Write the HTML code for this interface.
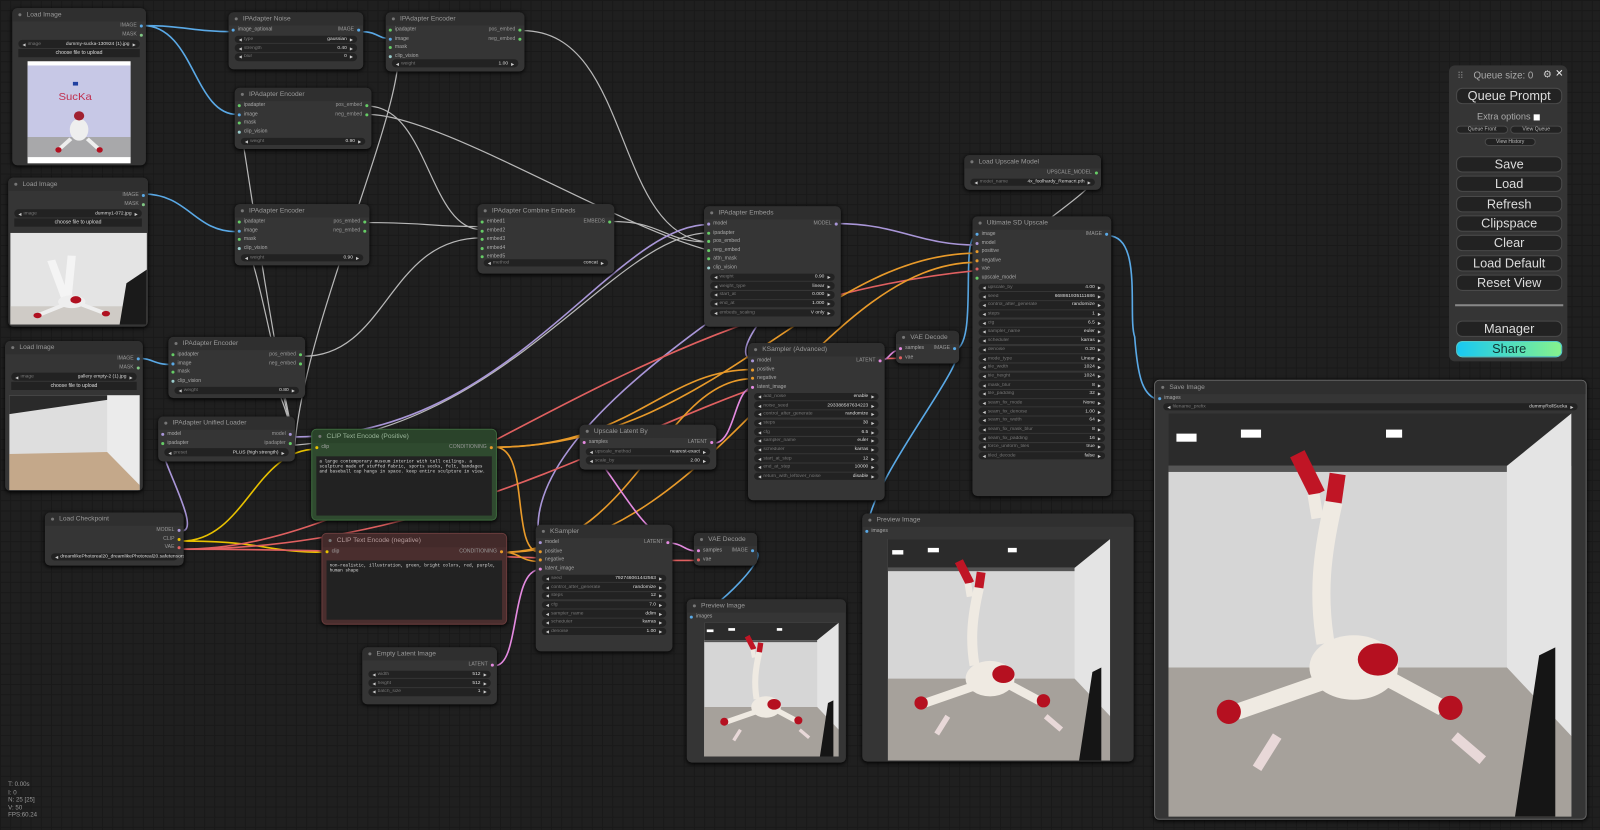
<!DOCTYPE html>
<html><head><meta charset="utf-8"><style>
*{box-sizing:border-box;margin:0;padding:0}
html,body{width:1600px;height:830px;overflow:hidden;background:#1e1e1e}
#st{position:absolute;left:0;top:0;width:1568px;height:813px;transform:scale(1.0204,1.0209);transform-origin:0 0;
background-color:#1f1f1f;background-image:linear-gradient(#191919 1px,transparent 1px),linear-gradient(90deg,#191919 1px,transparent 1px);background-size:10px 10px;font-family:"Liberation Sans",sans-serif}
svg.wires{position:absolute;left:0;top:0}
.n{position:absolute;background:#353535;border-radius:5px;box-shadow:0 1px 4px #000;color:#aaa;font-size:5px;overflow:hidden}
.t{height:13px;line-height:13px;font-size:6.5px;color:#9a9a9a;padding-left:14px;position:relative;background:#2f2f2f}
.t::before{content:"";position:absolute;left:6px;top:5px;width:3px;height:3px;border-radius:50%;background:#777}
.r{height:8.6px;line-height:8.6px;position:relative;padding:0 9px;display:flex;justify-content:space-between}
.r span{position:relative}
.i::before{content:"";position:absolute;left:-6px;top:3px;width:3px;height:3px;border-radius:50%;background:var(--c)}
.o::after{content:"";position:absolute;right:-6px;top:3px;width:3px;height:3px;border-radius:50%;background:var(--d)}
.o{color:#999}
.w{height:7.5px;margin:1.2px 6px;background:#222;border-radius:4px;display:flex;align-items:center;padding:0 4px;font-size:4.8px;color:#ddd}
.w::before{content:"◀";color:#ccc;margin-right:2px;font-size:4px}
.w::after{content:"▶";color:#ccc;margin-left:3px;font-size:4px}
.w b{flex:1;font-weight:normal;color:#777;white-space:nowrap;overflow:hidden}
.w i{font-style:normal;white-space:nowrap}
.bt{height:8px;margin:1px 6px;background:#222;text-align:center;line-height:8px;font-size:5px;color:#ddd}
.ta{position:absolute;background:#222;color:#ddd;font-family:"Liberation Mono",monospace;font-size:4.3px;line-height:5.2px;padding:3px}
.pic{position:absolute;overflow:hidden}
.pic svg{width:100%;height:100%;display:block}
#qp{position:absolute;left:1420px;top:64px;width:116px;height:290px;background:#353535;border-radius:6px;color:#ddd}
#qp .b{position:absolute;left:7px;width:104px;height:16px;background:#222;border:1px solid #4a4a4a;border-radius:6px;text-align:center;line-height:14px;font-size:12.5px}
#qp .s{position:absolute;height:8px;background:#222;border:1px solid #4a4a4a;border-radius:5px;font-size:5px;line-height:6px;text-align:center;color:#bbb}
#stats{position:absolute;left:8px;top:766px;font-size:6px;line-height:7.5px;color:#9a9a9a}
</style></head><body><div id="st">
<svg class="wires" width="1568" height="813" fill="none" stroke-width="1.6">
<g stroke="#5aa9e6">
<path d="M140,25 C180,25 190,31 228,31"/><path d="M140,25 C190,25 190,112 232,112"/>
<path d="M354,31 C370,31 370,38 384,38"/><path d="M140,190 C185,190 190,227 232,227"/>
<path d="M136,351 C150,351 150,357 168,357"/><path d="M738,540 C760,540 700,600 680,605"/>
<path d="M934,343 C960,343 850,470 850,520"/><path d="M934,343 C960,343 940,231 957,231"/>
<path d="M1086,231 C1120,231 1105,310 1112,330 C1115,370 1120,392 1140,392"/>
</g>
<g stroke="#b8b8b8" stroke-width="1.2">
<path d="M512,30 C620,30 600,230 694,237"/><path d="M360,104 C420,104 420,225 472,225"/>
<path d="M358,218 C420,218 420,222 472,222"/><path d="M297,349 C380,349 380,233 472,233"/>
<path d="M600,217 C650,217 650,237 694,237"/><path d="M360,112 C430,112 600,220 694,245"/>
<path d="M289,436 C260,300 240,140 232,104"/><path d="M289,436 C270,360 250,240 232,218"/>
<path d="M289,436 C300,300 420,60 384,30"/><path d="M289,436 C280,400 260,300 168,349"/>
<path d="M289,436 C500,420 600,230 694,228"/><path d="M1065,185 C1050,200 1030,210 957,273"/>
</g>
<g stroke="#a996d8">
<path d="M178,520 C200,520 150,440 158,428"/><path d="M289,428 C500,428 600,220 694,220"/>
<path d="M820,219 C880,219 900,240 957,240"/><path d="M820,219 C840,219 700,340 737,353"/>
<path d="M820,219 C850,230 500,400 529,532"/>
</g>
<g stroke="#e8c100"><path d="M178,530 C240,530 250,440 310,440"/><path d="M178,530 C260,530 260,541 318,541"/></g>
<g stroke="#e06060"><path d="M178,538 C400,538 600,300 957,265"/><path d="M178,538 C400,538 500,549 685,549"/><path d="M178,538 C500,538 700,351 880,351"/></g>
<g stroke="#e89a2a">
<path d="M485,438 C520,438 500,541 529,541"/><path d="M485,438 C620,438 650,362 737,362"/>
<path d="M485,438 C700,438 800,248 957,248"/><path d="M493,541 C510,541 510,550 529,550"/>
<path d="M493,541 C620,541 650,371 737,371"/><path d="M493,541 C700,541 800,257 957,257"/>
</g>
<g stroke="#e48ae0">
<path d="M485,652 C510,652 500,558 529,558"/><path d="M655,532 C670,532 670,540 685,540"/>
<path d="M700,434 C720,434 720,380 737,380"/><path d="M863,353 C872,353 872,343 882,343"/>
<path d="M655,532 C620,510 600,460 572,434"/>
</g>
</svg>

<!-- Load Image 1 -->
<div class="n" style="left:12px;top:8px;width:131px;height:154px"><div class="t">Load Image</div>
<div class="r"><span></span><span class="o" style="--d:#5aa9e6">IMAGE</span></div>
<div class="r"><span></span><span class="o" style="--d:#81c784">MASK</span></div>
<div class="w"><b>image</b><i>dummy-sucka-130924 (1).jpg</i></div><div class="bt">choose file to upload</div></div>
<div class="pic" style="left:27px;top:60px;width:101px;height:100px;background:#fff"><svg viewBox="0 0 100 100" preserveAspectRatio="none" style="position:absolute;top:4px;height:90px"><rect width="100" height="80" fill="#c7c8e6"/><rect y="78" width="100" height="22" fill="#a8a8aa"/><text x="30" y="38" font-size="11" fill="#c03050" font-family="Liberation Sans">SucKa</text><rect x="44" y="18" width="5" height="4" fill="#2040a0"/><ellipse cx="50" cy="70" rx="9" ry="12" fill="#eee"/><circle cx="50" cy="55" r="5" fill="#a02030"/><path d="M42,80 L30,92 M58,80 L70,92" stroke="#eee" stroke-width="4"/><circle cx="30" cy="92" r="3" fill="#b01020"/><circle cx="70" cy="92" r="3" fill="#b01020"/></svg></div>

<!-- Load Image 2 -->
<div class="n" style="left:8px;top:174px;width:137px;height:146px"><div class="t">Load Image</div>
<div class="r"><span></span><span class="o" style="--d:#5aa9e6">IMAGE</span></div>
<div class="r"><span></span><span class="o" style="--d:#81c784">MASK</span></div>
<div class="w"><b>image</b><i>dummy1-072.jpg</i></div><div class="bt">choose file to upload</div></div>
<div class="pic" style="left:10px;top:228px;width:134px;height:90px"><svg viewBox="0 0 100 100" preserveAspectRatio="none"><rect width="100" height="100" fill="#e4e4e4"/><rect y="80" width="100" height="20" fill="#cfcbc6"/><polygon points="85,55 100,40 100,100 80,100" fill="#1a1a1a"/><path d="M30,30 L40,70 M45,25 L42,70" stroke="#f4f4f4" stroke-width="6"/><ellipse cx="45" cy="75" rx="10" ry="7" fill="#eee"/><circle cx="48" cy="73" r="4" fill="#b01020"/><path d="M40,78 L20,90 M52,78 L70,88" stroke="#eee" stroke-width="4"/><circle cx="20" cy="90" r="3" fill="#b01020"/><circle cx="70" cy="88" r="3" fill="#b01020"/></svg></div>

<!-- Load Image 3 -->
<div class="n" style="left:5px;top:334px;width:135px;height:147px"><div class="t">Load Image</div>
<div class="r"><span></span><span class="o" style="--d:#5aa9e6">IMAGE</span></div>
<div class="r"><span></span><span class="o" style="--d:#81c784">MASK</span></div>
<div class="w"><b>image</b><i>gallery empty-2 (1).jpg</i></div><div class="bt">choose file to upload</div></div>
<div class="pic" style="left:9px;top:387px;width:128px;height:93px"><svg viewBox="0 0 100 100" preserveAspectRatio="none"><rect width="100" height="100" fill="#dedede"/><polygon points="0,0 100,0 75,5 0,20" fill="#2a2a2a"/><rect x="75" width="25" height="100" fill="#ebebeb"/><polygon points="0,62 75,60 100,95 100,100 0,100" fill="#c4a88a"/></svg></div>

<!-- IPAdapter Noise -->
<div class="n" style="left:224px;top:12px;width:132px;height:56px"><div class="t">IPAdapter Noise</div>
<div class="r"><span class="i" style="--c:#5aa9e6">image_optional</span><span class="o" style="--d:#5aa9e6">IMAGE</span></div>
<div class="w"><b>type</b><i>gaussian</i></div><div class="w"><b>strength</b><i>0.40</i></div><div class="w"><b>blur</b><i>0</i></div></div>

<!-- Encoders -->
<div class="n" style="left:378px;top:12px;width:136px;height:58px"><div class="t">IPAdapter Encoder</div>
<div class="r"><span class="i" style="--c:#6c6">ipadapter</span><span class="o" style="--d:#6c6">pos_embed</span></div>
<div class="r"><span class="i" style="--c:#5aa9e6">image</span><span class="o" style="--d:#6c6">neg_embed</span></div>
<div class="r"><span class="i" style="--c:#6c6">mask</span></div><div class="r"><span class="i" style="--c:#9cc">clip_vision</span></div>
<div class="w" style="margin-top:-1px"><b>weight</b><i>1.00</i></div></div>

<div class="n" style="left:230px;top:86px;width:134px;height:60px"><div class="t">IPAdapter Encoder</div>
<div class="r"><span class="i" style="--c:#6c6">ipadapter</span><span class="o" style="--d:#6c6">pos_embed</span></div>
<div class="r"><span class="i" style="--c:#5aa9e6">image</span><span class="o" style="--d:#6c6">neg_embed</span></div>
<div class="r"><span class="i" style="--c:#6c6">mask</span></div><div class="r"><span class="i" style="--c:#9cc">clip_vision</span></div>
<div class="w"><b>weight</b><i>0.90</i></div></div>

<div class="n" style="left:230px;top:200px;width:132px;height:60px"><div class="t">IPAdapter Encoder</div>
<div class="r"><span class="i" style="--c:#6c6">ipadapter</span><span class="o" style="--d:#6c6">pos_embed</span></div>
<div class="r"><span class="i" style="--c:#5aa9e6">image</span><span class="o" style="--d:#6c6">neg_embed</span></div>
<div class="r"><span class="i" style="--c:#6c6">mask</span></div><div class="r"><span class="i" style="--c:#9cc">clip_vision</span></div>
<div class="w"><b>weight</b><i>0.90</i></div></div>

<div class="n" style="left:165px;top:330px;width:134px;height:60px"><div class="t">IPAdapter Encoder</div>
<div class="r"><span class="i" style="--c:#6c6">ipadapter</span><span class="o" style="--d:#6c6">pos_embed</span></div>
<div class="r"><span class="i" style="--c:#5aa9e6">image</span><span class="o" style="--d:#6c6">neg_embed</span></div>
<div class="r"><span class="i" style="--c:#6c6">mask</span></div><div class="r"><span class="i" style="--c:#9cc">clip_vision</span></div>
<div class="w"><b>weight</b><i>0.80</i></div></div>

<!-- Unified loader -->
<div class="n" style="left:155px;top:408px;width:134px;height:44px"><div class="t">IPAdapter Unified Loader</div>
<div class="r"><span class="i" style="--c:#a996d8">model</span><span class="o" style="--d:#a996d8">model</span></div>
<div class="r"><span class="i" style="--c:#6c6">ipadapter</span><span class="o" style="--d:#6c6">ipadapter</span></div>
<div class="w"><b>preset</b><i>PLUS (high strength)</i></div></div>

<!-- Checkpoint -->
<div class="n" style="left:44px;top:502px;width:136px;height:52px"><div class="t">Load Checkpoint</div>
<div class="r"><span></span><span class="o" style="--d:#a996d8">MODEL</span></div>
<div class="r"><span></span><span class="o" style="--d:#e8c100">CLIP</span></div>
<div class="r"><span></span><span class="o" style="--d:#e06060">VAE</span></div>
<div class="w"><b>ckpt_name</b><i>dreamlikePhotoreal20_dreamlikePhotoreal20.safetensors</i></div></div>

<!-- Combine Embeds -->
<div class="n" style="left:468px;top:200px;width:134px;height:68px"><div class="t">IPAdapter Combine Embeds</div>
<div class="r"><span class="i" style="--c:#6c6">embed1</span><span class="o" style="--d:#6c6">EMBEDS</span></div>
<div class="r"><span class="i" style="--c:#6c6">embed2</span></div><div class="r"><span class="i" style="--c:#6c6">embed3</span></div>
<div class="r"><span class="i" style="--c:#6c6">embed4</span></div><div class="r"><span class="i" style="--c:#6c6">embed5</span></div>
<div class="w" style="margin-top:-2px"><b>method</b><i>concat</i></div></div>

<!-- IPAdapter Embeds -->
<div class="n" style="left:690px;top:202px;width:134px;height:118px"><div class="t">IPAdapter Embeds</div>
<div class="r"><span class="i" style="--c:#a996d8">model</span><span class="o" style="--d:#a996d8">MODEL</span></div>
<div class="r"><span class="i" style="--c:#6c6">ipadapter</span></div><div class="r"><span class="i" style="--c:#6c6">pos_embed</span></div>
<div class="r"><span class="i" style="--c:#6c6">neg_embed</span></div><div class="r"><span class="i" style="--c:#6c6">attn_mask</span></div>
<div class="r"><span class="i" style="--c:#9cc">clip_vision</span></div>
<div class="w"><b>weight</b><i>0.90</i></div><div class="w"><b>weight_type</b><i>linear</i></div><div class="w"><b>start_at</b><i>0.000</i></div><div class="w"><b>end_at</b><i>1.000</i></div><div class="w"><b>embeds_scaling</b><i>V only</i></div></div>

<!-- CLIP positive -->
<div class="n" style="left:305px;top:420px;width:182px;height:90px;background:#2f4a2f;border:1px solid #3e6a3e"><div class="t" style="background:#2a432a;color:#9ab59a">CLIP Text Encode (Positive)</div>
<div class="r"><span class="i" style="--c:#e8c100">clip</span><span class="o" style="--d:#e89a2a">CONDITIONING</span></div>
<div class="ta" style="left:4px;top:26px;width:172px;height:58px">a large contemporary museum interior with tall ceilings. a sculpture made of stuffed fabric, sports socks, felt, bandages and baseball cap hangs in space. keep entire sculpture in view.</div></div>

<!-- CLIP negative -->
<div class="n" style="left:315px;top:522px;width:182px;height:90px;background:#4a2e2e;border:1px solid #6a3c3c"><div class="t" style="background:#432a2a;color:#b59a9a">CLIP Text Encode (negative)</div>
<div class="r"><span class="i" style="--c:#e8c100">clip</span><span class="o" style="--d:#e89a2a">CONDITIONING</span></div>
<div class="ta" style="left:4px;top:26px;width:172px;height:58px">non-realistic, illustration, green, bright colors, red, purple, human shape</div></div>

<!-- Upscale Latent By -->
<div class="n" style="left:568px;top:416px;width:134px;height:44px"><div class="t">Upscale Latent By</div>
<div class="r"><span class="i" style="--c:#e48ae0">samples</span><span class="o" style="--d:#e48ae0">LATENT</span></div>
<div class="w"><b>upscale_method</b><i>nearest-exact</i></div><div class="w"><b>scale_by</b><i>2.00</i></div></div>

<!-- KSampler Advanced -->
<div class="n" style="left:733px;top:336px;width:134px;height:154px"><div class="t">KSampler (Advanced)</div>
<div class="r"><span class="i" style="--c:#a996d8">model</span><span class="o" style="--d:#e48ae0">LATENT</span></div>
<div class="r"><span class="i" style="--c:#e89a2a">positive</span></div><div class="r"><span class="i" style="--c:#e89a2a">negative</span></div>
<div class="r"><span class="i" style="--c:#e48ae0">latent_image</span></div>
<div class="w"><b>add_noise</b><i>enable</i></div><div class="w"><b>noise_seed</b><i>293388587634223</i></div><div class="w"><b>control_after_generate</b><i>randomize</i></div><div class="w"><b>steps</b><i>30</i></div><div class="w"><b>cfg</b><i>6.5</i></div><div class="w"><b>sampler_name</b><i>euler</i></div><div class="w"><b>scheduler</b><i>karras</i></div><div class="w"><b>start_at_step</b><i>12</i></div><div class="w"><b>end_at_step</b><i>10000</i></div><div class="w"><b>return_with_leftover_noise</b><i>disable</i></div></div>

<!-- VAE decode top -->
<div class="n" style="left:878px;top:324px;width:62px;height:32px"><div class="t">VAE Decode</div>
<div class="r"><span class="i" style="--c:#e48ae0">samples</span><span class="o" style="--d:#5aa9e6">IMAGE</span></div>
<div class="r"><span class="i" style="--c:#e06060">vae</span></div></div>

<!-- Load Upscale Model -->
<div class="n" style="left:945px;top:152px;width:134px;height:34px"><div class="t">Load Upscale Model</div>
<div class="r"><span></span><span class="o" style="--d:#6c6">UPSCALE_MODEL</span></div>
<div class="w"><b>model_name</b><i>4x_foolhardy_Remacri.pth</i></div></div>

<!-- Ultimate SD Upscale -->
<div class="n" style="left:953px;top:212px;width:136px;height:274px"><div class="t">Ultimate SD Upscale</div>
<div class="r"><span class="i" style="--c:#5aa9e6">image</span><span class="o" style="--d:#5aa9e6">IMAGE</span></div>
<div class="r"><span class="i" style="--c:#a996d8">model</span></div><div class="r"><span class="i" style="--c:#e89a2a">positive</span></div>
<div class="r"><span class="i" style="--c:#e89a2a">negative</span></div><div class="r"><span class="i" style="--c:#e06060">vae</span></div>
<div class="r"><span class="i" style="--c:#6c6">upscale_model</span></div>
<div class="w"><b>upscale_by</b><i>4.00</i></div><div class="w"><b>seed</b><i>668861935111686</i></div><div class="w"><b>control_after_generate</b><i>randomize</i></div><div class="w"><b>steps</b><i>1</i></div><div class="w"><b>cfg</b><i>6.5</i></div><div class="w"><b>sampler_name</b><i>euler</i></div><div class="w"><b>scheduler</b><i>karras</i></div><div class="w"><b>denoise</b><i>0.20</i></div><div class="w"><b>mode_type</b><i>Linear</i></div><div class="w"><b>tile_width</b><i>1024</i></div><div class="w"><b>tile_height</b><i>1024</i></div><div class="w"><b>mask_blur</b><i>8</i></div><div class="w"><b>tile_padding</b><i>32</i></div><div class="w"><b>seam_fix_mode</b><i>None</i></div><div class="w"><b>seam_fix_denoise</b><i>1.00</i></div><div class="w"><b>seam_fix_width</b><i>64</i></div><div class="w"><b>seam_fix_mask_blur</b><i>8</i></div><div class="w"><b>seam_fix_padding</b><i>16</i></div><div class="w"><b>force_uniform_tiles</b><i>true</i></div><div class="w"><b>tiled_decode</b><i>false</i></div></div>

<!-- KSampler -->
<div class="n" style="left:525px;top:514px;width:134px;height:124px"><div class="t">KSampler</div>
<div class="r"><span class="i" style="--c:#a996d8">model</span><span class="o" style="--d:#e48ae0">LATENT</span></div>
<div class="r"><span class="i" style="--c:#e89a2a">positive</span></div><div class="r"><span class="i" style="--c:#e89a2a">negative</span></div>
<div class="r"><span class="i" style="--c:#e48ae0">latent_image</span></div>
<div class="w"><b>seed</b><i>792746061442563</i></div><div class="w"><b>control_after_generate</b><i>randomize</i></div><div class="w"><b>steps</b><i>12</i></div><div class="w"><b>cfg</b><i>7.0</i></div><div class="w"><b>sampler_name</b><i>ddim</i></div><div class="w"><b>scheduler</b><i>karras</i></div><div class="w"><b>denoise</b><i>1.00</i></div></div>

<!-- VAE decode 2 -->
<div class="n" style="left:680px;top:522px;width:62px;height:32px"><div class="t">VAE Decode</div>
<div class="r"><span class="i" style="--c:#e48ae0">samples</span><span class="o" style="--d:#5aa9e6">IMAGE</span></div>
<div class="r"><span class="i" style="--c:#e06060">vae</span></div></div>

<!-- Empty Latent -->
<div class="n" style="left:355px;top:634px;width:132px;height:56px"><div class="t">Empty Latent Image</div>
<div class="r"><span></span><span class="o" style="--d:#e48ae0">LATENT</span></div>
<div class="w"><b>width</b><i>512</i></div><div class="w"><b>height</b><i>512</i></div><div class="w"><b>batch_size</b><i>1</i></div></div>

<!-- Preview small -->
<div class="n" style="left:673px;top:587px;width:156px;height:160px"><div class="t">Preview Image</div>
<div class="r"><span class="i" style="--c:#5aa9e6">images</span></div></div>
<!-- Preview big -->
<div class="n" style="left:845px;top:503px;width:266px;height:243px"><div class="t">Preview Image</div>
<div class="r"><span class="i" style="--c:#5aa9e6">images</span></div></div>
<!-- Save -->
<div class="n" style="left:1131px;top:372px;width:424px;height:431px;border:1px solid #666"><div class="t">Save Image</div>
<div class="r"><span class="i" style="--c:#5aa9e6">images</span></div>
<div class="w" style="margin:0 8px"><b>filename_prefix</b><i>dummyRollSucka</i></div></div>

<svg width="0" height="0" style="position:absolute"><defs><g id="room">
<rect width="100" height="100" fill="#d6d6d6"/>
<rect width="100" height="13" fill="#2b2b2b"/><rect y="13" width="84" height="1.5" fill="#555"/>
<rect x="2" y="5" width="5" height="2" fill="#fff"/><rect x="18" y="4" width="5" height="2" fill="#fff"/><rect x="54" y="4" width="4" height="2" fill="#fff"/>
<polygon points="84,13 84,63 100,80 100,0" fill="#e4e4e4"/>
<polygon points="0,63 84,63 100,80 100,100 0,100" fill="#a6a19b"/>
<polygon points="92,60 96,58 96,100 86,100" fill="#151515"/>
<path d="M39,57 C37,45 38,35 41,22" stroke="#efeae2" stroke-width="4.5" fill="none"/>
<path d="M41,22 L42,15" stroke="#c01525" stroke-width="4"/><path d="M37,20 L32,10" stroke="#c01525" stroke-width="4"/>
<path d="M37,26 L36,20" stroke="#efeae2" stroke-width="3"/>
<ellipse cx="46" cy="63" rx="11" ry="8" fill="#efeae2"/><ellipse cx="52" cy="61" rx="5" ry="4" fill="#b51020"/>
<path d="M40,66 L17,74" stroke="#efeae2" stroke-width="4"/><path d="M55,66 L68,73" stroke="#efeae2" stroke-width="4"/>
<circle cx="15" cy="74" r="3" fill="#b51020"/><circle cx="70" cy="73" r="3" fill="#b51020"/>
<path d="M22,88 L27,80" stroke="#e8d8d8" stroke-width="2.5"/><path d="M71,80 L78,86" stroke="#e8d8d8" stroke-width="2.5"/>
</g></defs></svg>
<div class="pic" style="left:690px;top:610px;width:132px;height:131px"><svg viewBox="0 0 100 100" preserveAspectRatio="none"><use href="#room"/></svg></div>
<div class="pic" style="left:870px;top:528px;width:218px;height:217px"><svg viewBox="0 0 100 100" preserveAspectRatio="none"><use href="#room"/></svg></div>
<div class="pic" style="left:1145px;top:405px;width:395px;height:395px"><svg viewBox="0 0 100 100" preserveAspectRatio="none"><use href="#room"/></svg></div>

<!-- Queue panel -->
<div id="qp">
<div style="position:absolute;left:8px;top:5px;font-size:9px;color:#777">⠿</div>
<div style="position:absolute;left:24px;top:5px;font-size:9.5px;color:#aaa">Queue size: 0</div>
<div style="position:absolute;left:92px;top:4px;font-size:10px;color:#ccc">⚙</div>
<div style="position:absolute;left:104px;top:3px;font-size:10px;color:#eee">✕</div>
<div class="b" style="top:22px">Queue Prompt</div>
<div style="position:absolute;left:0;width:116px;top:45px;text-align:center;font-size:9px;color:#aaa">Extra options <span style="display:inline-block;width:6px;height:6px;background:#fff;vertical-align:middle"></span></div>
<div class="s" style="left:7px;top:59px;width:51px">Queue Front</div><div class="s" style="left:60px;top:59px;width:51px">View Queue</div>
<div class="s" style="left:35px;top:71px;width:50px">View History</div>
<div class="b" style="top:89px">Save</div><div class="b" style="top:108px">Load</div><div class="b" style="top:128px">Refresh</div>
<div class="b" style="top:147px">Clipspace</div><div class="b" style="top:166px">Clear</div><div class="b" style="top:186px">Load Default</div>
<div class="b" style="top:205px">Reset View</div>
<div style="position:absolute;left:6px;top:234px;width:106px;height:2px;background:#888"></div>
<div class="b" style="top:250px">Manager</div>
<div class="b" style="top:270px;background:linear-gradient(90deg,#18c8f2,#86f28c);color:#133;border-color:#5cc">Share</div>
</div>
<div id="stats">T: 0.00s<br>I: 0<br>N: 25 [25]<br>V: 50<br>FPS:60.24</div>
</div></body></html>
